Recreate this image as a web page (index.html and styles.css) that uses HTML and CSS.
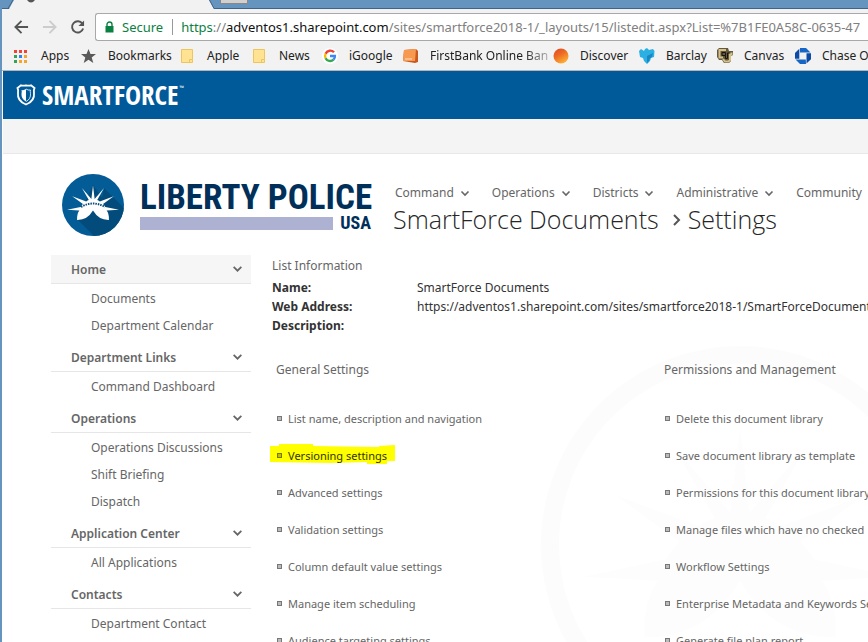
FILE: index.html
```
<!DOCTYPE html>
<html lang="en">
<head>
<meta charset="utf-8">
<title>SmartForce Documents - Settings</title>
<link rel="stylesheet" href="styles.css">
</head>
<body>
<svg class="defs" aria-hidden="true">
  <defs>
    <symbol id="chev" viewBox="0 0 10 10"><path d="M1.500 3.500 5 7 8.500 3.500" fill="none" stroke="currentColor" stroke-width="1.600"/></symbol>
    <symbol id="folder" viewBox="0 0 12 14"><path d="M.5.500h11v10h-1v3H.5z" fill="#ffe292" stroke="#edc55b"/><path d="M8.500 13.500v-3h3v3z" fill="#ffe292" stroke="#edc55b"/></symbol>
    <symbol id="crown" viewBox="0 0 160 110">
      <path d="M0 76 42 67Q45 62 49 58L16 34 59 50Q63 47 67 46L46 9 75 43 80 0 85 43 114 9 93 46Q97 47 101 50L144 34 111 58Q115 62 118 67L160 76 122 78Q130 88 129 107 98 108 80 78 62 108 31 107 30 88 38 78Z"/>
    </symbol>
  </defs>
</svg>

<div class="window">
  <div class="tabs">
    <svg class="tab" viewBox="0 0 220 9" aria-hidden="true">
      <path d="M9 9 14 0H209L214 9Z" fill="#f2f2f2"/><path d="M8 8.500 13 0M209.500 0 214 8.500" stroke="#3f6488" fill="none"/>
      <path d="M27 0Q31 5 35 0" fill="#555"/>
    </svg>
    <span class="newtab"></span>
  </div>
  <div class="toolbar">
    <button class="tool" aria-label="Back"><svg viewBox="0 0 16 16"><path d="M15 8H2M8 1.500 1.500 8 8 14.500" fill="none" stroke="#555" stroke-width="2"/></svg></button>
    <button class="tool" aria-label="Forward"><svg viewBox="0 0 16 16"><path d="M1 8H14M8 1.500 14.500 8 8 14.500" fill="none" stroke="#ccc" stroke-width="2"/></svg></button>
    <button class="tool" aria-label="Reload"><svg viewBox="0 0 16 16"><path d="M13.200 4.500A6 6 0 1 0 14 9.500" fill="none" stroke="#555" stroke-width="2"/><path d="M15 1V7H9z" fill="#555"/></svg></button>
    <div class="omnibox">
      <svg class="lock" viewBox="0 0 9 12"><path d="M.5 5h8v6.500h-8z" fill="#0b8043"/><path d="M2 6V3.500a2.500 2.500 0 0 1 5 0V6" fill="none" stroke="#0b8043" stroke-width="1.400"/></svg>
      <span class="secure">Secure</span>
      <div class="url"><span class="scheme">https</span>://<b>adventos1.sharepoint.com</b>/sites/smartforce2018-1/_layouts/15/listedit.aspx?List=%7B1FE0A58C-0635-47</div>
    </div>
  </div>
  <nav class="bookmarks" aria-label="Bookmarks">
    <a href="#" class="bm-apps"><svg viewBox="0 0 16 16"><path d="M0 2h3v3H0zM5 2h3v3H5zM10 2h3v3h-3z" fill="#f44336"/><path d="M0 7h3v3H0z" fill="#33a457"/><path d="M5 7h3v3H5z" fill="#2d86ee"/><path d="M10 7h3v3h-3z" fill="#f5a52c"/><path d="M0 12h3v3H0z" fill="#33a457"/><path d="M5 12h3v3H5zM10 12h3v3h-3z" fill="#f5a52c"/></svg>Apps</a>
    <a href="#" class="bm-marks"><svg viewBox="0 0 16 16"><path d="m7.500 1 2 5h5.500l-4.300 3.400L12.300 15 7.500 11.700 2.700 15l1.600-5.600L0 6h5.500z" fill="#5a5a5a"/></svg>Bookmarks</a>
    <a href="#" class="bm-apple"><svg class="fold"><use href="#folder"/></svg>Apple</a>
    <a href="#" class="bm-news"><svg class="fold"><use href="#folder"/></svg>News</a>
    <a href="#" class="bm-google"><svg viewBox="0 0 16 16"><circle cx="8" cy="8" r="8" fill="#fff"/><g fill="none" stroke-width="2.400"><path d="M12 4.300A5 5 0 0 0 3.600 5.800" stroke="#ea4335"/><path d="M3.600 5.800A5 5 0 0 0 3.600 10.200" stroke="#fbbc05"/><path d="M3.600 10.200A5 5 0 0 0 11.500 11.700" stroke="#34a853"/><path d="M11.500 11.700A5 5 0 0 0 12.900 8H8" stroke="#4285f4"/></g></svg>iGoogle</a>
    <a href="#" class="bm-bank"><svg viewBox="0 0 16 16"><path d="m1 2 12-1 2 2v11l-3 1L0 13z" fill="#c85a1e"/><path d="m1 2 12-1-1 12H0z" fill="#f79a50"/><path d="M2 11h7" stroke="#fde0c4"/></svg><span>FirstBank Online Ban</span></a>
    <a href="#" class="bm-disc"><svg viewBox="0 0 16 16"><defs><linearGradient id="og" x2=".6" y2="1"><stop stop-color="#dc4326"/><stop offset=".5" stop-color="#ee6b25"/><stop offset="1" stop-color="#fcb034"/></linearGradient></defs><circle cx="8" cy="8" r="7.500" fill="url(#og)"/></svg>Discover</a>
    <a href="#" class="bm-barc"><svg viewBox="0 0 16 16"><path d="M6 1 8 0 10 2 14 1 15.500 3 15 9 12 10 11 13 8 16 5 13 4 10 1 9 0 3 2 1 5 3z" fill="#2bb0e4"/><path d="m8 8 6-3-1 4-2 1-1 3-2 2z" fill="#1a86c4"/></svg>Barclay</a>
    <a href="#" class="bm-canv"><svg viewBox="0 0 16 16"><path d="M2 0h9l1 3h4v4l-2 1v5l-2 2H7l-2-3H2L0 9V2z" fill="#64583e"/><path d="M9 2H2.500v7.500H6M6 11l2 2.500h3.500l1.500-1.500V6.500h1.500v-2" fill="none" stroke="#d3c08a" stroke-width="2"/><path d="M8.500 4.500H5v3h3.500v-3M8.500 7.500v3h2V5h2" stroke="#17140f" stroke-width="1" fill="none"/></svg>Canvas</a>
    <a href="#" class="bm-chase"><svg viewBox="0 0 16 16"><path d="M5 0h6l4.500 4.500H5z" fill="#1766c6"/><path d="M16 5.300v6L11.500 15.500V5.300z" fill="#0c4ba5"/><path d="M11 16H5L.5 11.500h10.300z" fill="#1766c6"/><path d="M0 10.800V5L4.300.700v10.100z" fill="#0c4ba5"/></svg>Chase O</a>
  </nav>

  <div class="page">
    <header class="suite">
      <svg class="shield" viewBox="0 0 20 22"><path d="M10 1.300Q13 2 15 1.300L18.500 4Q17.500 6 18 9 19 17 10 20.500 1 17 2 9 2.500 6 1.500 4L5 1.300Q7 2 10 1.300Z" fill="none" stroke="#fff" stroke-width="1.800"/><path d="M10 5V17.500Q5 15 5.500 9.500 6 7.500 5.500 6 8 6.500 10 5Z" fill="#fff"/><path d="M10 5Q12 6.500 14.500 6 14 7.500 14.500 9.500 15 15 10 17.500" fill="none" stroke="#fff" stroke-width=".8"/></svg>
      <span class="brand">SMARTFORCE</span><sup>™</sup>
    </header>
    <div class="ribbon"></div>
    <div class="masthead">
      <a href="#" class="logo" aria-label="Liberty Police USA">
        <svg class="seal" viewBox="0 0 62 62"><defs><clipPath id="disc"><circle cx="31" cy="31" r="31"/></clipPath></defs><circle cx="31" cy="31" r="31" fill="#035c96"/><g clip-path="url(#disc)"><path d="M31 11 40 24 42 14 70 42V70H40L15 45Z" fill="#034b7a"/></g><use href="#crown" x="5" y="11" width="52" height="36" fill="#fff"/><path d="M19 33Q31 26 43 33" stroke="#0a4d7d" stroke-width="2" stroke-dasharray="1.500 1" fill="none"/></svg>
        <span class="wordmark"><span class="liberty">LIBERTY POLICE</span><span class="usa"><i></i>USA</span></span>
      </a>
      <div class="titles">
        <nav class="topnav" aria-label="Site">
          <a href="#">Command<svg><use href="#chev"/></svg></a>
          <a href="#">Operations<svg><use href="#chev"/></svg></a>
          <a href="#">Districts<svg><use href="#chev"/></svg></a>
          <a href="#">Administrative<svg><use href="#chev"/></svg></a>
          <a href="#">Community</a>
        </nav>
        <h1>SmartForce Documents<svg viewBox="0 0 10 14"><path d="m2 3 5 5-5 5" fill="none" stroke="#555" stroke-width="2"/></svg>Settings</h1>
      </div>
    </div>
    <div class="body">
      <nav class="side" aria-label="Sections">
        <section><h2 class="current">Home<svg><use href="#chev"/></svg></h2><a href="#">Documents</a><a href="#">Department Calendar</a></section>
        <section><h2>Department Links<svg><use href="#chev"/></svg></h2><a href="#">Command Dashboard</a></section>
        <section><h2>Operations<svg><use href="#chev"/></svg></h2><a href="#">Operations Discussions</a><a href="#">Shift Briefing</a><a href="#">Dispatch</a></section>
        <section><h2>Application Center<svg><use href="#chev"/></svg></h2><a href="#">All Applications</a></section>
        <section><h2>Contacts<svg><use href="#chev"/></svg></h2><a href="#">Department Contact</a></section>
      </nav>
      <main>
        <svg class="watermark" viewBox="0 0 400 400" aria-hidden="true"><circle cx="200" cy="200" r="190" fill="none" stroke="#fcfcfc" stroke-width="18"/><use href="#crown" x="44" y="84" width="312" height="214" fill="#fdfdfd"/></svg>
        <h3>List Information</h3>
        <dl>
          <dt>Name:</dt><dd>SmartForce Documents</dd>
          <dt>Web Address:</dt><dd>https://adventos1.sharepoint.com/sites/smartforce2018-1/SmartForceDocuments</dd>
          <dt>Description:</dt><dd></dd>
        </dl>
        <div class="columns">
          <section><h3>General Settings</h3>
            <ul>
              <li><a href="#">List name, description and navigation</a></li>
              <li class="marked"><svg class="marker" viewBox="0 0 126 21" preserveAspectRatio="none" aria-hidden="true"><path d="M0 2H9V0H43V2L109 3V2L125 1V17H117V20H97V18L60 19 0 18Z" fill="#ff0"/></svg><a href="#">Versioning settings</a></li>
              <li><a href="#">Advanced settings</a></li>
              <li><a href="#">Validation settings</a></li>
              <li><a href="#">Column default value settings</a></li>
              <li><a href="#">Manage item scheduling</a></li>
              <li><a href="#">Audience targeting settings</a></li>
            </ul>
          </section>
          <section><h3>Permissions and Management</h3>
            <ul>
              <li><a href="#">Delete this document library</a></li>
              <li><a href="#">Save document library as template</a></li>
              <li><a href="#">Permissions for this document library</a></li>
              <li><a href="#">Manage files which have no checked</a></li>
              <li><a href="#">Workflow Settings</a></li>
              <li><a href="#">Enterprise Metadata and Keywords Se</a></li>
              <li><a href="#">Generate file plan report</a></li>
            </ul>
          </section>
        </div>
      </main>
    </div>
  </div>
</div>
</body>
</html>
```
FILE: styles.css
```
*, *::before { box-sizing: border-box; }
body { margin: 0; height: 100vh; overflow: hidden; background: #fff; color: #666; font: 12px/18px "Noto Sans", "Open Sans", sans-serif; white-space: nowrap; }
a { color: inherit; text-decoration: none; }
h1, h2, h3, ul, dl, dd { margin: 0; padding: 0; font-weight: 400; }
.defs { position: absolute; width: 0; height: 0; }
svg { flex: none; }
.window { min-height: 100vh; border-left: 2px solid #6595be; }

.tabs { display: flex; height: 9px; background: #6595be; border-bottom: 1px solid #3f6488; }
.tab { width: 220px; height: 9px; margin-left: -2px; }
.newtab { width: 28px; height: 4px; background: #d0d0d0; border: 1px solid #888; border-top: 0; }
.toolbar { display: flex; align-items: center; height: 34px; padding: 3px 0 1px 12px; background: #f2f2f2; }
.tool { width: 28px; height: 28px; padding: 0; border: 0; background: none; text-align: left; }
.tool svg { display: block; width: 15px; height: 16px; }
.omnibox { display: flex; align-items: center; flex: 1; min-width: 0; height: 28px; margin-left: -3px; padding-left: 9px; background: #fff; border: 1px solid #a8a8a8; border-right: 0; border-radius: 3px 0 0 3px; overflow: hidden; font-size: 13px; }
.lock { width: 9px; height: 12px; }
.secure { margin: 0 8px 0 8px; padding-right: 9px; color: #0b8043; border-right: 1px solid #999; line-height: 16px; }
.url { color: #808080; }
.url b { font-weight: 400; color: #111; }
.scheme { color: #0b8043; }

.bookmarks { display: flex; height: 28px; padding: 0 0 1px 12px; background: #f2f2f2; border-bottom: 1px solid #b6b4b6; color: #222; overflow: hidden; }
.bookmarks a { display: flex; align-items: center; flex: none; gap: 11px; }
.bookmarks svg { width: 16px; height: 16px; }
.bookmarks .fold { width: 12px; height: 14px; margin-right: 3px; }
.bm-apps { width: 67px; }
.bm-marks { width: 100px; }
.bm-apple { width: 72px; }
.bm-news { width: 69px; }
.bm-google { width: 81px; }
.bm-bank { width: 150px; }
.bm-bank span { mask-image: linear-gradient(90deg, #000 80%, rgba(0, 0, 0, .3)); }
.bm-disc { width: 86px; }
.bm-barc { width: 78px; }
.bm-canv { width: 78px; }

.page { border-left: 1px solid #fff; }
.suite { display: flex; align-items: center; height: 48px; padding-left: 13px; background: #005a9a; color: #fff; }
.shield { width: 20px; height: 22px; margin-right: 6px; }
.brand { font: 700 27px/30px "Open Sans Condensed", "Roboto Condensed", "Noto Sans", sans-serif; }
.suite sup { font-size: 6px; line-height: 18px; align-self: flex-start; margin: 8px 0 0 1px; }
.ribbon { height: 35px; background: #f4f4f4; border-bottom: 1px solid #e8e8e8; }
.masthead { display: flex; height: 101px; padding: 20px 0 0 59px; }
.logo { display: flex; width: 331px; flex: none; gap: 16px; }
.seal { width: 62px; height: 62px; }
.wordmark { flex: none; width: 231px; padding-top: 6px; color: #00305a; }
.liberty { display: block; font: 700 35px/36px "Roboto Condensed", Roboto, sans-serif; }
.usa { display: flex; align-items: center; gap: 7px; font: 700 18px/14px "Roboto Condensed", Roboto, sans-serif; }
.usa i { flex: 1; height: 13px; background: #adb2d2; }
.titles { flex: 1; min-width: 0; padding-top: 9px; }
.topnav { display: flex; gap: 22px; padding-left: 2px; line-height: 20px; }
.topnav a { display: flex; align-items: center; gap: 6px; }
.topnav svg { width: 10px; height: 10px; }
h1 { display: flex; align-items: center; font: 300 25px/32px "Open Sans", "Noto Sans", sans-serif; color: #262626; }
h1 svg { width: 10px; height: 14px; margin: 0 6px 0 13px; }

.body { display: flex; padding-left: 48px; }
.side { width: 200px; flex: none; margin-right: 21px; }
.side section { padding-bottom: 4px; }
.side h2 { display: flex; align-items: center; justify-content: space-between; height: 29px; margin-bottom: 1px; padding: 2px 8px 0 20px; border-bottom: 1px solid #e6e6e6; font-size: 12px; font-weight: 600; }
.side .current { background: #f6f6f6; }
.side h2 svg { width: 11px; height: 11px; margin-bottom: 3px; }
.side a { display: block; padding-left: 40px; line-height: 27px; }
main { position: relative; flex: 1; min-width: 0; }
main h3 { position: relative; font-size: 12px; line-height: 22px; }
.watermark { position: absolute; left: 268px; top: 90px; width: 400px; height: 400px; }
dl { position: relative; display: grid; grid-template-columns: 145px 1fr; margin-top: 1px; line-height: 19px; color: #333; }
dt { font-weight: 700; }
.columns { position: relative; display: grid; grid-template-columns: 388px 388px; padding: 24px 0 0 4px; }
.columns ul { list-style: none; padding-top: 19px; font-size: 11px; }
.columns li { display: flex; align-items: center; position: relative; height: 37px; gap: 6px; padding-left: 1px; }
.columns li::before { content: ""; width: 5px; height: 5px; background: #bbb; border: 1px solid #777; z-index: 1; }
.columns li a { position: relative; }
.columns .marked a { color: #333300; }
.columns .marked::before { background: #bfbf00; border-color: #777700; }
.marker { position: absolute; left: -6px; top: 7px; width: 126px; height: 21px; }
```
